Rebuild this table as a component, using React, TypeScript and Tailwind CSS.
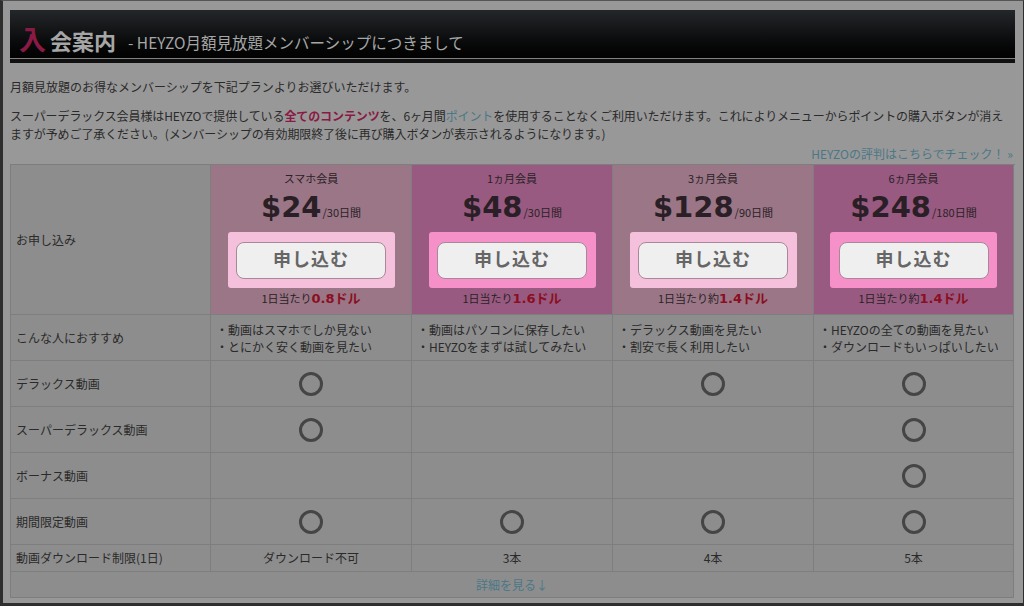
import React from 'react';

const jp = { fontFamily: '"Noto Sans CJK JP", "Noto Sans", sans-serif' };

type Plan = {
  name: string;
  price: string;
  term: string;
  perDay: string;
  amount: string;
  deep: boolean;
  recs: string[];
};

const plans: Plan[] = [
  { name: 'スマホ会員', price: '$24', term: '/30日間', perDay: '1日当たり', amount: '0.8ドル', deep: false, recs: ['・動画はスマホでしか見ない', '・とにかく安く動画を見たい'] },
  { name: '1ヵ月会員', price: '$48', term: '/30日間', perDay: '1日当たり', amount: '1.6ドル', deep: true, recs: ['・動画はパソコンに保存したい', '・HEYZOをまずは試してみたい'] },
  { name: '3ヵ月会員', price: '$128', term: '/90日間', perDay: '1日当たり約', amount: '1.4ドル', deep: false, recs: ['・デラックス動画を見たい', '・割安で長く利用したい'] },
  { name: '6ヵ月会員', price: '$248', term: '/180日間', perDay: '1日当たり約', amount: '1.4ドル', deep: true, recs: ['・HEYZOの全ての動画を見たい', '・ダウンロードもいっぱいしたい'] },
];

const features: { label: string; marks: boolean[] }[] = [
  { label: 'デラックス動画', marks: [true, false, true, true] },
  { label: 'スーパーデラックス動画', marks: [true, false, false, true] },
  { label: 'ボーナス動画', marks: [false, false, false, true] },
  { label: '期間限定動画', marks: [true, true, true, true] },
];

const downloads = ['ダウンロード不可', '3本', '4本', '5本'];

const Circle = () => (
  <svg width="26" height="26" viewBox="0 0 26 26">
    <circle cx="13" cy="13" r="10.5" fill="none" stroke="#454545" strokeWidth="3" />
  </svg>
);

const cell = 'border-r border-b border-[#7e7e7e]';

const PlanHead = ({ p }: { p: Plan }) => (
  <div className={`${cell} flex flex-col items-center pt-[6px] ${p.deep ? 'bg-[#985a80]' : 'bg-[#9a7686]'}`}>
    <div className="text-[11px] leading-[14px] text-[#2a2226]">{p.name}</div>
    <div className="flex items-baseline mt-[5px] h-[34px]">
      <span className="text-[29px] font-bold leading-[34px] text-[#2a1f26]" style={{ fontFamily: '"DejaVu Sans", sans-serif' }}>{p.price}</span>
      <span className="text-[11px] text-[#2a2226] ml-[1px]">{p.term}</span>
    </div>
    <div className={`mt-[8px] w-[167px] h-[56px] rounded-[3px] flex items-center justify-center ${p.deep ? 'bg-[#f590c8]' : 'bg-[#f5c0dc]'}`}>
      <div className="w-[150px] h-[37px] rounded-[8px] bg-[#efefef] border border-[#a88898] flex items-center justify-center pb-[3px] text-[18px] font-bold text-[#666] tracking-[1px]">
        申し込む
      </div>
    </div>
    <div className="mt-[1px] flex items-baseline text-[11px] text-[#2a2226]">
      <span>{p.perDay}</span>
      <span className="text-[13px] font-bold text-[#8a0f22]" style={{ fontFamily: '"DejaVu Sans", "Noto Sans CJK JP", sans-serif' }}>{p.amount}</span>
    </div>
  </div>
);

export default function App() {
  return (
    <div className="w-[1024px] h-[606px] bg-[#989898] border-l-[3px] border-b-[3px] border-t border-r border-[#2e2e2e] border-t-[#555] overflow-hidden" style={jp}>
      <div className="ml-[7px] mr-[8px] mt-[9px]">
        {/* header bar */}
        <div className="h-[48px] bg-gradient-to-b from-[#24272a] to-[#020202] flex items-end pb-[4px] pl-[9px]">
          <span className="text-[27px] font-bold leading-[30px] text-[#8a1a44]">入</span>
          <span className="text-[22px] font-bold leading-[27px] text-[#a6a6a6] ml-[4px]">会案内</span>
          <span className="text-[15.5px] leading-[24px] text-[#a6a6a6] ml-[12px]">- HEYZO月額見放題メンバーシップにつきまして</span>
        </div>
        <div className="h-[1px] bg-[#808080]" />
        <div className="h-[4px] bg-[#111]" />

        <p className="mt-[15px] text-[12px] leading-[18px] text-[#2a2a2a]">月額見放題のお得なメンバーシップを下記プランよりお選びいただけます。</p>
        <p className="mt-[11px] text-[12px] leading-[18px] text-[#2a2a2a] tracking-[-0.1px]">
          スーパーデラックス会員様はHEYZOで提供している<b className="text-[#8a1a44]">全てのコンテンツ</b>を、6ヶ月間<span className="text-[#4b7787]">ポイント</span>を使用することなくご利用いただけます。これによりメニューからポイントの購入ボタンが消えますが予めご了承ください。(メンバーシップの有効期限終了後に再び購入ボタンが表示されるようになります。)
        </p>
        <div className="mt-[3px] text-right text-[12px] leading-[16px] text-[#4b7787] pr-[2px]">HEYZOの評判はこちらでチェック！ »</div>

        {/* plan table */}
        <div className="mt-[2px] border-t border-l border-[#7e7e7e] grid grid-cols-[200px_201px_201px_201px_200px] text-[12px] text-[#2a2a2a]">
          <div className={`${cell} bg-[#8d8d8d] flex items-center pl-[5px] h-[150px]`}>お申し込み</div>
          {plans.map((p) => (
            <PlanHead key={p.name} p={p} />
          ))}

          <div className={`${cell} bg-[#8d8d8d] flex items-center pl-[5px] h-[46px]`}>こんな人におすすめ</div>
          {plans.map((p) => (
            <div key={p.name} className={`${cell} bg-[#8d8d8d] flex flex-col justify-center pl-[5px] leading-[17px] h-[46px]`}>
              {p.recs.map((r) => (
                <div key={r}>{r}</div>
              ))}
            </div>
          ))}

          {features.map((f) => (
            <React.Fragment key={f.label}>
              <div className={`${cell} bg-[#8d8d8d] flex items-center pl-[5px] h-[46px]`}>{f.label}</div>
              {f.marks.map((m, i) => (
                <div key={i} className={`${cell} bg-[#8d8d8d] flex items-center justify-center h-[46px]`}>
                  {m && <Circle />}
                </div>
              ))}
            </React.Fragment>
          ))}

          <div className={`${cell} bg-[#8d8d8d] flex items-center pl-[5px] h-[27px]`}>動画ダウンロード制限(1日)</div>
          {downloads.map((d) => (
            <div key={d} className={`${cell} bg-[#8d8d8d] flex items-center justify-center h-[27px]`}>{d}</div>
          ))}

          <div className={`${cell} col-span-5 bg-[#8d8d8d] flex items-center justify-center h-[26px] text-[#4b7787]`}>詳細を見る↓</div>
        </div>
      </div>
    </div>
  );
}
